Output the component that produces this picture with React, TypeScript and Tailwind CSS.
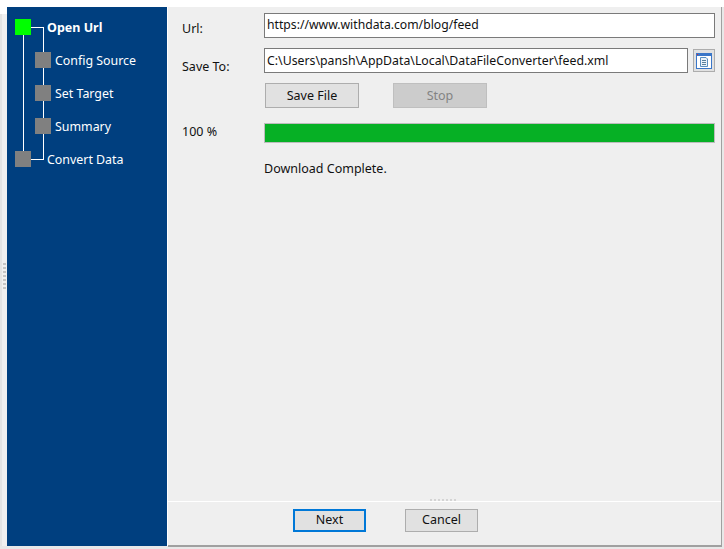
const font = { fontFamily: '"Noto Sans", sans-serif' };

// one step in the wizard tree
const steps = [
  { label: "Open Url", boxLeft: 8, textLeft: 40, top: 12, active: true, bold: true },
  { label: "Config Source", boxLeft: 28, textLeft: 48, top: 45 },
  { label: "Set Target", boxLeft: 28, textLeft: 48, top: 78 },
  { label: "Summary", boxLeft: 28, textLeft: 48, top: 111 },
  { label: "Convert Data", boxLeft: 8, textLeft: 40, top: 144 },
];

const Sidebar = () => (
  <div className="relative w-[160px] shrink-0 bg-[#003f7f] text-white">
    <div className="absolute left-[16px] top-[20px] h-[130px] w-px bg-white" />
    <div className="absolute left-[36px] top-[20px] h-[132px] w-px bg-white" />
    <div className="absolute left-[24px] top-[20px] h-px w-[13px] bg-white" />
    <div className="absolute left-[24px] top-[152px] h-px w-[13px] bg-white" />
    {steps.map((s) => (
      <div key={s.label}>
        <div
          className={s.active ? "absolute h-[16px] w-[16px] bg-[#00ff00]" : "absolute h-[16px] w-[16px] bg-[#808080]"}
          style={{ left: s.boxLeft, top: s.top }}
        />
        <div
          className={s.bold ? "absolute text-[12.5px] font-bold leading-[16px]" : "absolute text-[12.4px] leading-[16px]"}
          style={{ left: s.textLeft, top: s.top + 1 }}
        >
          {s.label}
        </div>
      </div>
    ))}
  </div>
);

const BrowseIcon = () => (
  <svg width="16" height="16" viewBox="0 0 16 16">
    <rect x="0.5" y="0.5" width="15" height="15" fill="#fff" stroke="#3a76c8" />
    <rect x="0" y="0" width="16" height="3" fill="#3a76c8" />
    <rect x="1" y="1" width="1" height="1" fill="#e0202a" />
    <path d="M4.5 4.5H10L11.5 6V13.5H4.5Z" fill="#eaf2fa" stroke="#5a8fc0" />
    <path d="M6 7.5H10M6 9.5H10M6 11.5H10" stroke="#5a7f9a" />
  </svg>
);

// splitter grips, drawn over the panel edges
const VerticalGrip = () => (
  <div className="absolute left-[3px] top-[263px] flex flex-col gap-[2px]">
    {[0, 1, 2, 3, 4, 5, 6].map((i) => (
      <div key={i} className="h-[2px] w-[3px] bg-[#c4c4c4]" />
    ))}
  </div>
);

const HorizontalGrip = () => (
  <div className="absolute left-[430px] top-[499px] flex gap-[2px]">
    {[0, 1, 2, 3, 4, 5, 6].map((i) => (
      <div key={i} className="h-[2px] w-[2px] bg-[#d4d4d4]" />
    ))}
  </div>
);

const App = () => {
  return (
    <div className="relative flex h-[549px] w-[724px] flex-col bg-[#e8e8e8] text-[12.5px] text-[#111]" style={font}>
      <div className="h-[7px] shrink-0 bg-white" />
      <div className="absolute left-0 top-0 h-[14px] w-[7px] bg-white" />
      <div className="flex h-[539px]">
        <div className="w-[7px] border-l-2 border-[#e4e4e4] bg-[#f0f0f0]" />
        <Sidebar />
        <div className="flex w-[554px] flex-col border-l border-white bg-[#efefef]">
          <div className="flex-1 pl-[14px] pt-[6px]">
            <div className="flex h-[25px]">
              <div className="w-[82px] pt-[4px] leading-[24px]">Url:</div>
              <input
                readOnly
                value="https://www.withdata.com/blog/feed"
                className="h-[25px] w-[451px] border border-[#7a7a7a] bg-white px-[2px] pb-[2px] text-[12.2px] outline-none"
              />
            </div>
            <div className="mt-[10px] flex h-[25px]">
              <div className="w-[82px] pt-[7px] leading-[24px]">Save To:</div>
              <input
                readOnly
                value="C:\Users\pansh\AppData\Local\DataFileConverter\feed.xml"
                className="h-[25px] w-[424px] border border-[#7a7a7a] bg-white px-[2px] pb-[1px] text-[12.3px] outline-none"
              />
              <button className="ml-[5px] mt-[1px] flex h-[23px] w-[22px] items-center justify-center border border-[#adadad] bg-[#e1e1e1]">
                <BrowseIcon />
              </button>
            </div>
            <div className="ml-[83px] mt-[10px] flex gap-[34px]">
              <button className="h-[25px] w-[94px] border border-[#adadad] bg-[#e1e1e1] pt-[2px]">Save File</button>
              <button className="h-[25px] w-[94px] border border-[#bfbfbf] bg-[#cccccc] pt-[2px] text-[#838383]">Stop</button>
            </div>
            <div className="mt-[15px] flex h-[20px] items-center">
              <div className="w-[82px] pb-[2px]">100 %</div>
              <div className="h-[20px] w-[451px] border border-[#bcbcbc] bg-[#06b025]" />
            </div>
            <div className="ml-[82px] mt-[17px] leading-[18px]">Download Complete.</div>
          </div>
          <div className="flex h-[45px] items-start gap-[39px] border-t border-white pl-[125px] pt-[7px]">
            <button className="h-[23px] w-[73px] border-2 border-[#0078d7] bg-[#e1e1e1]">Next</button>
            <button className="h-[23px] w-[73px] border border-[#adadad] bg-[#e1e1e1]">Cancel</button>
          </div>
        </div>
        <div className="w-px bg-[#a0a0a0]" />
      </div>
      <div className="absolute left-[168px] top-[545px] h-[2px] w-[554px] bg-[#a0a0a0]" />
      <VerticalGrip />
      <HorizontalGrip />
    </div>
  );
};

export default App;
